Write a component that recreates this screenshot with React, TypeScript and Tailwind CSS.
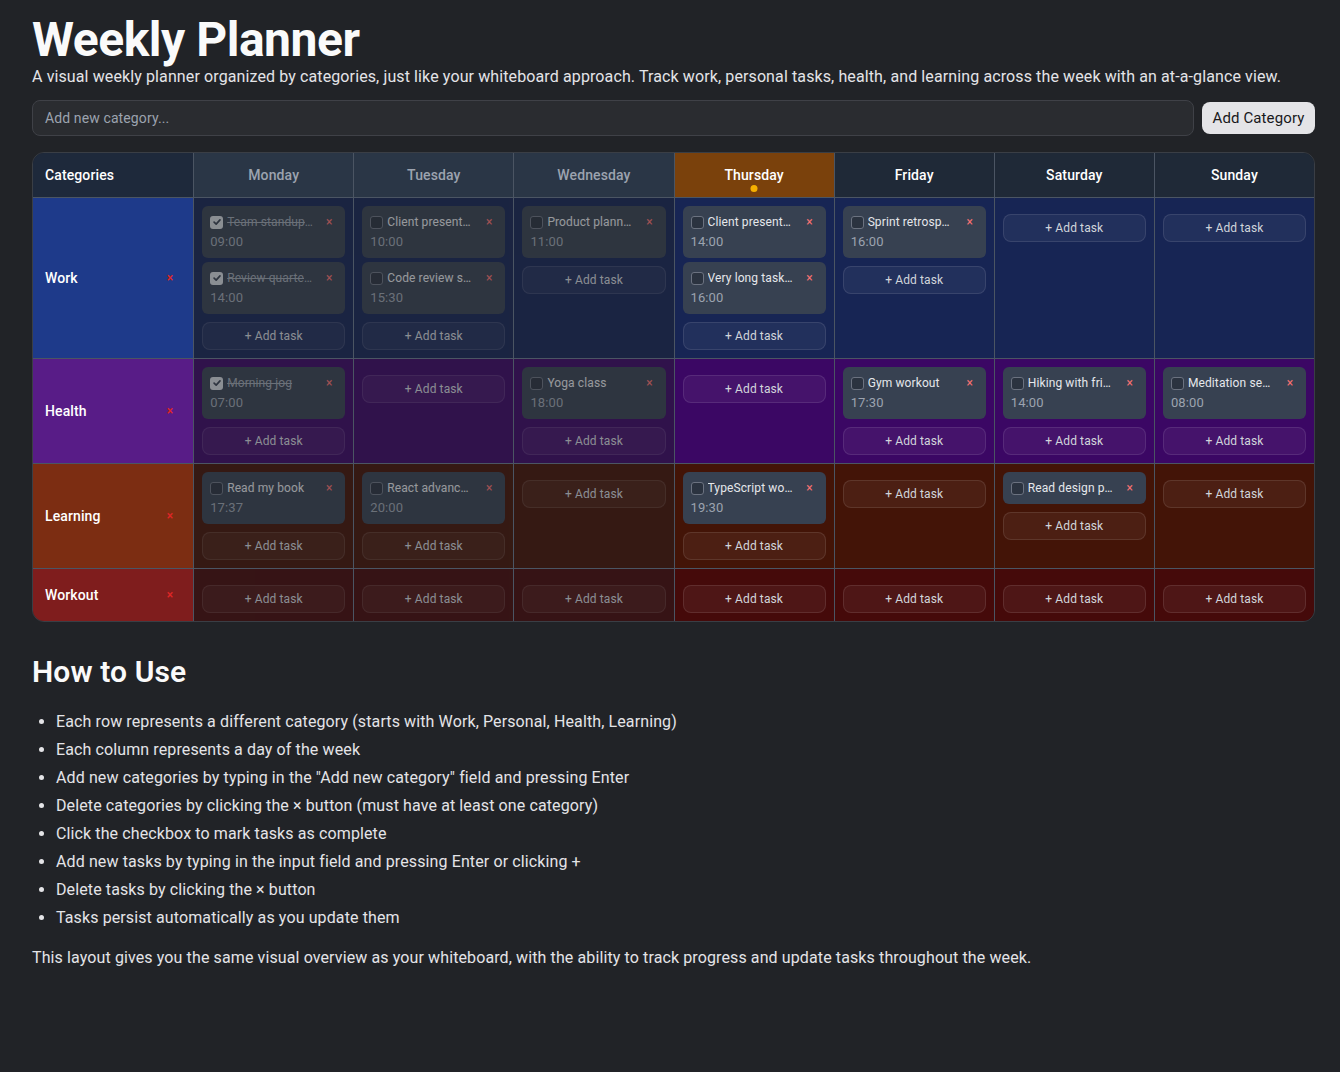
type Task = { title: string; time?: string; done?: boolean };

type Category = {
  name: string;
  labelBg: string;
  cellBg: string;
  tasks: Task[][];
};

const days = ["Monday", "Tuesday", "Wednesday", "Thursday", "Friday", "Saturday", "Sunday"];
const today = 3;

const categories: Category[] = [
  {
    name: "Work",
    labelBg: "bg-[#1e3a8a]",
    cellBg: "bg-[#172554]",
    tasks: [
      [
        { title: "Team standup meeting", time: "09:00", done: true },
        { title: "Review quarterly reports", time: "14:00", done: true },
      ],
      [
        { title: "Client presentation prep", time: "10:00" },
        { title: "Code review session", time: "15:30" },
      ],
      [{ title: "Product planning meeting", time: "11:00" }],
      [
        { title: "Client presentation", time: "14:00" },
        { title: "Very long task name that keeps going", time: "16:00" },
      ],
      [{ title: "Sprint retrospective", time: "16:00" }],
      [],
      [],
    ],
  },
  {
    name: "Health",
    labelBg: "bg-[#581c87]",
    cellBg: "bg-[#3b0764]",
    tasks: [
      [{ title: "Morning jog", time: "07:00", done: true }],
      [],
      [{ title: "Yoga class", time: "18:00" }],
      [],
      [{ title: "Gym workout", time: "17:30" }],
      [{ title: "Hiking with friends", time: "14:00" }],
      [{ title: "Meditation session", time: "08:00" }],
    ],
  },
  {
    name: "Learning",
    labelBg: "bg-[#7c2d12]",
    cellBg: "bg-[#431407]",
    tasks: [
      [{ title: "Read my book", time: "17:37" }],
      [{ title: "React advanced patterns", time: "20:00" }],
      [],
      [{ title: "TypeScript workshop", time: "19:30" }],
      [],
      [{ title: "Read design patterns" }],
      [],
    ],
  },
  {
    name: "Workout",
    labelBg: "bg-[#7f1d1d]",
    cellBg: "bg-[#450a0a]",
    tasks: [[], [], [], [], [], [], []],
  },
];

const howTo = [
  "Each row represents a different category (starts with Work, Personal, Health, Learning)",
  "Each column represents a day of the week",
  'Add new categories by typing in the "Add new category" field and pressing Enter',
  "Delete categories by clicking the × button (must have at least one category)",
  "Click the checkbox to mark tasks as complete",
  "Add new tasks by typing in the input field and pressing Enter or clicking +",
  "Delete tasks by clicking the × button",
  "Tasks persist automatically as you update them",
];

const Checkbox = ({ checked }: { checked?: boolean }) =>
  checked ? (
    <span className="flex h-[13px] w-[13px] shrink-0 items-center justify-center rounded-[3px] bg-[#d1d5db]">
      <svg viewBox="0 0 12 12" className="h-[10px] w-[10px]" fill="none" stroke="#374151" strokeWidth="2" strokeLinecap="round" strokeLinejoin="round">
        <path d="M2.5 6.2 5 8.6 9.6 3.4" />
      </svg>
    </span>
  ) : (
    <span className="h-[13px] w-[13px] shrink-0 rounded-[3px] border border-[#6b7280] bg-[#2b3340]" />
  );

const TaskCard = ({ task }: { task: Task }) => (
  <div className="rounded-md bg-[#374151] p-2">
    <div className="flex h-4 items-center gap-1">
      <Checkbox checked={task.done} />
      <span
        className={
          task.done
            ? "min-w-0 flex-1 truncate text-xs leading-4 text-[#9ca3af] line-through"
            : "min-w-0 flex-1 truncate text-xs leading-4 text-[#e5e7eb]"
        }
      >
        {task.title}
      </span>
      <span className="ml-1 w-4 text-center text-xs leading-4 text-[#f87171]">×</span>
    </div>
    {task.time && <div className="mt-1 text-[13px] leading-4 text-[#9ca3af]">{task.time}</div>}
  </div>
);

export default function App() {
  return (
    <div className="min-h-[1072px] bg-[#212327] pl-8 pr-[25px] pt-4 pb-16 font-['Roboto',sans-serif] tracking-[0.007em] text-[#f4f4f5]">
      <h1 className="text-5xl leading-none font-bold tracking-[-0.01em] text-[#fafafa]">Weekly Planner</h1>
      <p className="mt-px text-base leading-6 text-[#e4e4e7]">
        A visual weekly planner organized by categories, just like your whiteboard approach. Track work, personal tasks, health, and learning across the week with an at-a-glance view.
      </p>

      <div className="mt-[11px] flex items-center gap-2">
        <div className="flex h-9 flex-1 items-center rounded-lg border border-[#3f4147] bg-[#2a2c30] px-3 text-sm text-[#9ca3af]">
          Add new category...
        </div>
        <button className="h-8 w-[113px] rounded-lg bg-[#e4e4e7] text-[15px] text-[#18181b]">Add Category</button>
      </div>

      <div className="mt-4 overflow-hidden rounded-xl border border-[#3a3e45]">
        <div className="grid grid-cols-8 border-b border-[#4b5563]">
          <div className="flex h-11 items-center bg-[#1e293b] px-3 text-sm font-medium text-white">Categories</div>
          {days.map((d, i) => (
            <div
              key={d}
              className={
                i < today
                  ? "flex h-11 items-center justify-center border-l border-[#4b5563] bg-[#2a3646] text-sm font-medium text-[#9ca3af]"
                  : i === today
                  ? "relative flex h-11 items-center justify-center border-l border-[#4b5563] bg-[#7a410c] text-sm font-medium text-white"
                  : "flex h-11 items-center justify-center border-l border-[#4b5563] bg-[#1f2937] text-sm font-medium text-white"
              }
            >
              {d}
              {i === today && <span className="absolute bottom-[5px] left-1/2 h-[7px] w-[7px] -translate-x-1/2 rounded-full bg-[#f5b000]" />}
            </div>
          ))}
        </div>

        {categories.map((cat, ci) => (
          <div
            key={cat.name}
            className={ci < categories.length - 1 ? "grid grid-cols-8 border-b border-[#4b5563]" : "grid grid-cols-8"}
          >
            <div className={`flex items-center justify-between pl-3 pr-5 ${cat.labelBg}`}>
              <span className="text-sm font-medium text-white">{cat.name}</span>
              <span className="text-xs font-semibold text-[#dc2626]">×</span>
            </div>
            {cat.tasks.map((list, di) => (
              <div key={di} className="border-l border-[#4b5563] bg-[#212327]">
                <div className={`h-full p-2 ${cat.cellBg} ${di < today ? "opacity-60" : ""}`}>
                  <div className="flex flex-col gap-1">
                    {list.map((t) => (
                      <TaskCard key={t.title} task={t} />
                    ))}
                  </div>
                  <button className="mt-2 h-7 w-full rounded-lg border border-white/10 bg-white/5 text-xs text-[#d1d5db]">
                    + Add task
                  </button>
                </div>
              </div>
            ))}
          </div>
        ))}
      </div>

      <h2 className="mt-8 text-3xl leading-9 font-semibold text-[#fafafa]">How to Use</h2>
      <ul className="mt-5 list-disc space-y-1 pl-6 text-base leading-6 text-[#e4e4e7]">
        {howTo.map((item) => (
          <li key={item}>{item}</li>
        ))}
      </ul>
      <p className="mt-4 text-base leading-6 text-[#e4e4e7]">
        This layout gives you the same visual overview as your whiteboard, with the ability to track progress and update tasks throughout the week.
      </p>
    </div>
  );
}
